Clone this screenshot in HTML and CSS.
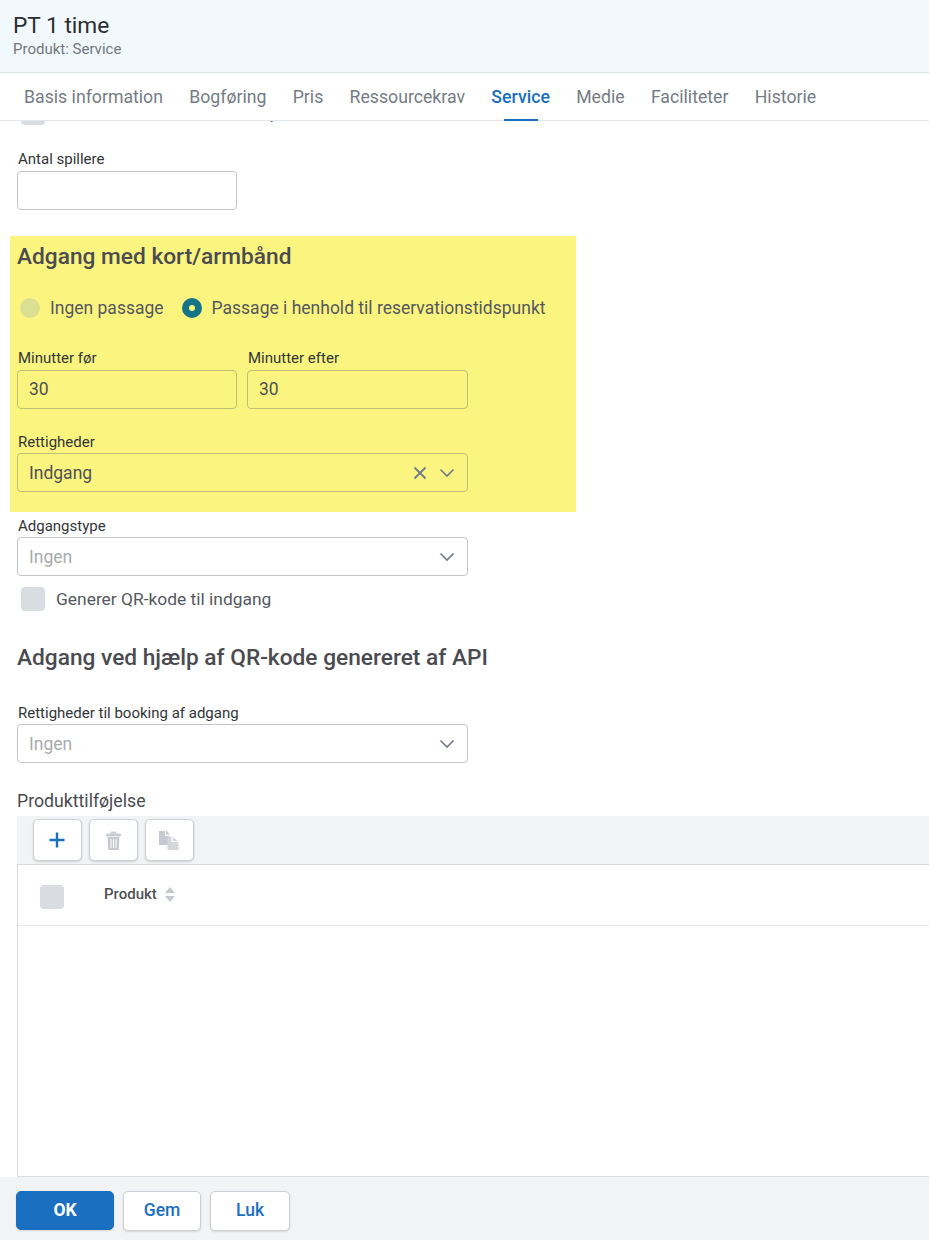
FILE: index.html
```html
<!DOCTYPE html>
<html lang="da">
<head>
<meta charset="utf-8">
<title>PT 1 time</title>
<link rel="stylesheet" href="styles.css">
</head>
<body>
<div class="app">
  <header class="head">
    <div class="title">PT 1 time</div>
    <div class="subtitle">Produkt: Service</div>
  </header>
  <nav class="tabs">
    <span class="tab">Basis information</span>
    <span class="tab">Bogføring</span>
    <span class="tab">Pris</span>
    <span class="tab">Ressourcekrav</span>
    <span class="tab active">Service</span>
    <span class="tab">Medie</span>
    <span class="tab">Faciliteter</span>
    <span class="tab">Historie</span>
  </nav>
  <main class="content">
    <div class="check-row clipped"><span class="checkbox"></span><span class="check-text">Kunden skal indtaste antal spillere</span></div>
    <div class="field players">
      <label class="label">Antal spillere</label>
      <div class="input"></div>
    </div>
    <section class="highlight">
      <h2 class="heading">Adgang med kort/armbånd</h2>
      <div class="radios">
        <span class="radio-item"><span class="radio"></span>Ingen passage</span>
        <span class="radio-item"><span class="radio on"></span>Passage i henhold til reservationstidspunkt</span>
      </div>
      <div class="two">
        <div class="field w220"><label class="label">Minutter før</label><div class="input">30</div></div>
        <div class="field w221"><label class="label">Minutter efter</label><div class="input">30</div></div>
      </div>
      <div class="field w451 rights">
        <label class="label">Rettigheder</label>
        <div class="input select">
          <span class="grow">Indgang</span>
          <svg class="x" width="14" height="14" viewBox="0 0 14 14"><path d="M1.5 1.5l11 11M12.5 1.5l-11 11" fill="none" stroke="#6f7a89" stroke-width="1.8"/></svg>
          <svg class="chev" width="16" height="10" viewBox="0 0 16 10"><path d="M1.5 1.5L8 8l6.5-6.5" fill="none" stroke="#6f7a89" stroke-width="1.6"/></svg>
        </div>
      </div>
    </section>
    <div class="field w451 type">
      <label class="label">Adgangstype</label>
      <div class="input select placeholder">
        <span class="grow">Ingen</span>
        <svg class="chev" width="16" height="10" viewBox="0 0 16 10"><path d="M1.5 1.5L8 8l6.5-6.5" fill="none" stroke="#6f7a89" stroke-width="1.6"/></svg>
      </div>
    </div>
    <div class="check-row qr"><span class="checkbox"></span><span class="check-text">Generer QR-kode til indgang</span></div>
    <h2 class="heading api">Adgang ved hjælp af QR-kode genereret af API</h2>
    <div class="field w451 booking">
      <label class="label">Rettigheder til booking af adgang</label>
      <div class="input select placeholder">
        <span class="grow">Ingen</span>
        <svg class="chev" width="16" height="10" viewBox="0 0 16 10"><path d="M1.5 1.5L8 8l6.5-6.5" fill="none" stroke="#6f7a89" stroke-width="1.6"/></svg>
      </div>
    </div>
    <div class="addon-title">Produkttilføjelse</div>
    <div class="toolbar">
      <button class="tool"><svg width="16" height="16" viewBox="0 0 16 16"><path d="M8 .5v15M.5 8h15" stroke="#1a6fc0" stroke-width="2.4" fill="none"/></svg></button>
      <button class="tool"><svg width="15" height="19" viewBox="0 0 15 19"><path d="M5 2.400V1h5v1.400M.5 3h14v2H.5z" fill="#c6cad0" stroke="#c6cad0" stroke-width=".8"/><path d="M1.600 6h11.800l-.6 13H2.200z" fill="#c6cad0"/><path d="M5 8v9M7.500 8v9M10 8v9" stroke="#fff" stroke-width="1"/></svg></button>
      <button class="tool"><svg width="20" height="20" viewBox="0 0 20 20"><path d="M0 1h6v5h4.500v9H0z" fill="#c6cad0"/><path d="M7 0l4 4.500H7z" fill="#c6cad0"/><path d="M8.500 7h4v5h7v8h-11z" fill="#d3d6db"/><path d="M13.800 7l5.200 4h-5.200z" fill="#d3d6db"/></svg></button>
    </div>
    <div class="table">
      <div class="thead">
        <span class="checkbox"></span>
        <span class="th">Produkt</span>
        <svg class="sort" width="10" height="15" viewBox="0 0 10 15"><path d="M5 0l5 6H0zM5 15l5-6H0z" fill="#c6cad0"/></svg>
      </div>
    </div>
  </main>
  <footer class="foot">
    <button class="btn primary">OK</button>
    <button class="btn gem">Gem</button>
    <button class="btn">Luk</button>
  </footer>
</div>
</body>
</html>
```
FILE: styles.css
```css
* { box-sizing: border-box; }
html, body { margin: 0; height: 100%; }
body { font-family: Roboto, "Liberation Sans", sans-serif; color: #4f5156; background: #fff; }
.app { display: flex; flex-direction: column; height: 1240px; overflow: hidden; }

.head { height: 73px; flex: none; background: #f1f9fe; border-bottom: 1px solid #d9e2ea; padding: 13px 13px 0; }
.title { font-size: 22.700px; line-height: 26px; color: #2b2d30; }
.subtitle { font-size: 15px; line-height: 20px; color: #74777c; }

.tabs { height: 48px; flex: none; display: flex; gap: 26.250px; padding: 1px 24px 0; border-bottom: 1px solid #e3e6ea; background: #fff; position: relative; z-index: 1; }
.tab { font-size: 17.700px; line-height: 47px; color: #757c85; position: relative; white-space: nowrap; }
.tab.active { color: #1a6fc0; font-weight: 500; }
.tab.active::after { content: ""; position: absolute; left: 13px; right: 12px; bottom: -1px; height: 2px; background: #1a6fc0; }

.content { flex: 1; min-height: 0; overflow: hidden; padding-left: 17px; display: flex; flex-direction: column; align-items: flex-start; }

.checkbox { width: 24px; height: 24px; flex: none; border-radius: 4px; background: #d9dde1; display: block; }
.check-row { display: flex; align-items: center; gap: 11px; margin-left: 4px; }
.check-text { font-size: 17.400px; line-height: 24px; color: #55585e; white-space: nowrap; }
.clipped { margin-top: -20px; }
.clipped .check-text { font-size: 17.100px; }

.field { display: flex; flex-direction: column; }
.label { font-size: 15px; line-height: 18px; color: #333539; padding-left: 1px; margin-bottom: 3px; }
.rights .label, .type .label, .booking .label { margin-bottom: 2px; }
.input { height: 39px; border: 1px solid #c4c6cc; border-radius: 4px; padding: 0 11px; font-size: 17.500px; line-height: 36px; color: #4f5156; display: flex; align-items: center; }
.two .input { padding-bottom: 2px; }
.players { width: 220px; margin-top: 25px; }

.highlight { width: 565.500px; height: 276px; margin: 26px 0 0 -7px; padding: 0 0 0 7px; background: #fbf580; flex: none; }
.highlight .input { border-color: #c2bf78; }
.heading { margin: 0; font-size: 22.700px; line-height: 26px; font-weight: 500; color: #4a4b50; }
.highlight .heading { margin-top: 8px; }
.radios { display: flex; gap: 18px; margin-top: 26px; margin-left: 3px; }
.radio-item { display: flex; align-items: center; gap: 10px; font-size: 17.500px; line-height: 24px; color: #55585e; }
.radio { width: 20px; height: 20px; border-radius: 50%; background: #dbdf92; display: block; }
.radio.on { background: #157388; display: flex; align-items: center; justify-content: center; }
.radio.on::after { content: ""; width: 6px; height: 6px; border-radius: 50%; background: #fbf580; }

.two { display: flex; gap: 10px; margin-top: 29px; }
.w220 { width: 220px; }
.w221 { width: 221px; }
.w451 { width: 451px; }
.rights { margin-top: 24px; }
.grow { flex: 1; }
.x { margin-right: 12px; }
.chev { margin-right: 1px; }
.placeholder { color: #a9abad; }

.type { margin-top: 5px; }
.qr { margin-top: 11px; }
.api { margin-top: 34px; }
.booking { margin-top: 33px; }
.addon-title { font-size: 17.700px; line-height: 20px; margin-top: 28px; color: #4a4b50; }

.toolbar { width: 912px; height: 48px; flex: none; margin-top: 5px; padding: 3px 16px; background: #f2f3f5; display: flex; gap: 7.500px; }
.tool { width: 48.500px; height: 42px; background: #fff; border: 1px solid #ccd0d6; border-radius: 5px; box-shadow: 0 1px 2px rgba(0,0,0,.15); padding: 0; display: flex; align-items: center; justify-content: center; }

.table { width: 912px; flex: 1; min-height: 0; border-left: 1px solid #d9dde2; border-top: 1px solid #d9dde2; border-bottom: 1px solid #d9dde2; }
.thead { height: 61px; display: flex; align-items: center; padding: 4px 0 0 22px; border-bottom: 1px solid #e6e8eb; }
.th { font-size: 15px; font-weight: 500; color: #4f5156; margin: -6px 0 0 40px; }
.sort { margin: -6px 0 0 8px; }

.foot { height: 63px; flex: none; background: #f2f3f5; display: flex; gap: 9px; padding: 14px 16px 0; align-items: flex-start; }
.btn { height: 40px; width: 80px; font-family: inherit; font-size: 17.500px; font-weight: 500; color: #1a6fc0; background: #fff; border: 1px solid #ccd0d6; border-radius: 5px; box-shadow: 0 1px 2px rgba(0,0,0,.12); padding: 0 0 2px; }
.btn.gem { width: 78px; }
.btn.primary { width: 98px; height: 39px; background: #1a6fc0; color: #fff; border-color: #1a6fc0; font-weight: 700; }
```
